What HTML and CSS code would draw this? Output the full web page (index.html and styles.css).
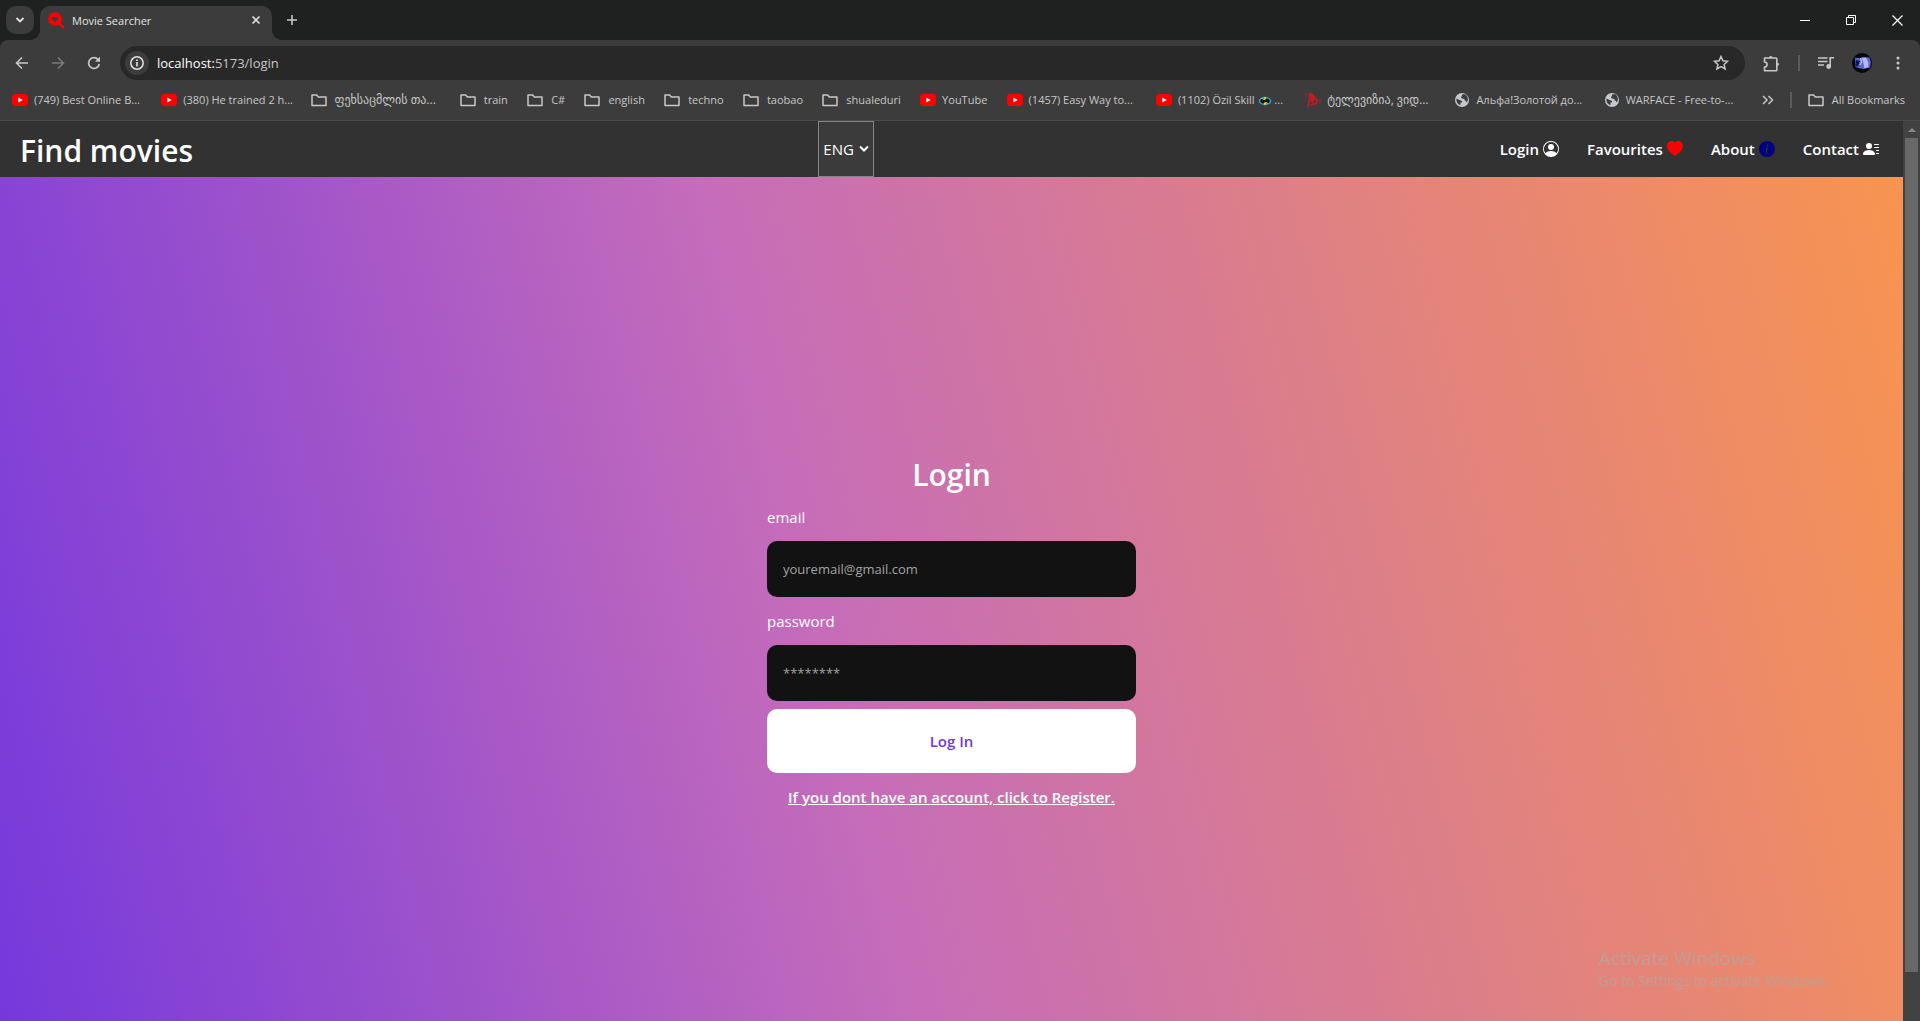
FILE: index.html
```html
<!DOCTYPE html>
<html lang="en">
<head>
<meta charset="utf-8">
<title>Movie Searcher</title>
<link rel="stylesheet" href="styles.css">
</head>
<body>
<svg class="defs" aria-hidden="true">
  <symbol id="yt" viewBox="0 0 16 16"><rect y="2" width="16" height="12" rx="3" fill="#f00"/><path d="M6.3 5.5v5l4.4-2.5z" fill="#fff"/></symbol>
  <symbol id="folder" viewBox="0 0 16 16"><path d="M1 3h4.700l1.600 2H15v8.500H1z" fill="none" stroke="#c7c7c7" stroke-width="1.500" stroke-linejoin="round"/></symbol>
  <symbol id="globe" viewBox="0 0 16 16"><circle cx="8" cy="8" r="7" fill="#c4c7cc"/><path d="M2.500 6.500l3 1.500 2.500 1v1.500H6.500V13c-2.500-.5-4.500-3-4-6.500zM8.500 2.300h2.800c1.700 1 2.700 3 2.600 5.200-.2 1.500-.8 2.500-1.400 3-.3-1.500-.8-2-2-2V7L8 6.500l-1-1z" fill="#3c3c3c"/></symbol>
</svg>

<header class="chrome">
  <div class="tabstrip">
    <button class="tab-search" aria-label="Search tabs"><svg width="12" height="12" viewBox="0 0 12 12"><path d="M2.500 4l3.500 3.500L9.500 4" fill="none" stroke="#e3e3e3" stroke-width="1.800"/></svg></button>
    <div class="tab">
      <svg width="17" height="17" viewBox="0 0 17 17"><circle cx="7" cy="7" r="6.800" fill="#f00"/><path d="M11 11l5 5" stroke="#f00" stroke-width="2.400"/><path d="M7 10.300L4.300 7.500C3 5.800 5.400 3.700 7 5.500c1.600-1.800 4 .3 2.700 2z" fill="#3c3c3c"/></svg>
      <span class="tab-title">Movie Searcher</span>
      <button class="plain" aria-label="Close tab"><svg width="10" height="10" viewBox="0 0 10 10"><path d="M1.500 1.500l7 7M8.500 1.500l-7 7" stroke="#dedede" stroke-width="1.600"/></svg></button>
    </div>
    <button class="plain new-tab" aria-label="New tab"><svg width="12" height="12" viewBox="0 0 12 12"><path d="M6 1v10M1 6h10" stroke="#c7c7c7" stroke-width="1.600"/></svg></button>
    <div class="window-controls">
      <button class="plain" aria-label="Minimize"><svg width="11" height="11" viewBox="0 0 11 11"><path d="M0 5.500h10" stroke="#fff"/></svg></button>
      <button class="plain" aria-label="Restore"><svg width="11" height="11" viewBox="0 0 11 11"><path d="M.5 2.500h7v7h-7zM2.500 2.500v-2h7v7h-2" fill="none" stroke="#fff"/></svg></button>
      <button class="plain" aria-label="Close"><svg width="11" height="11" viewBox="0 0 11 11"><path d="M.5.5l10 10M10.500.5l-10 10" stroke="#fff" stroke-width="1.200"/></svg></button>
    </div>
  </div>

  <div class="toolbar">
    <button class="plain" aria-label="Back"><svg width="14" height="14" viewBox="0 0 14 14"><path d="M13 7H2M7 1.500L1.500 7 7 12.500" fill="none" stroke="#c7c7c7" stroke-width="1.600"/></svg></button>
    <button class="plain" aria-label="Forward"><svg width="14" height="14" viewBox="0 0 14 14"><path d="M1 7h11M7 1.500L12.500 7 7 12.500" fill="none" stroke="#7a7a7a" stroke-width="1.600"/></svg></button>
    <button class="plain" aria-label="Reload"><svg width="14" height="14" viewBox="0 0 14 14"><path d="M12.300 8A5.400 5.400 0 1 1 11 3.400l1 1.100" fill="none" stroke="#c7c7c7" stroke-width="1.700"/><path d="M13 .8v5H8z" fill="#c7c7c7"/></svg></button>
    <div class="omnibox">
      <span class="site-info"><svg width="14" height="14" viewBox="0 0 14 14"><circle cx="7" cy="7" r="6.200" fill="none" stroke="#e3e3e3" stroke-width="1.500"/><path d="M7 6v4.500M7 3.500v1.500" stroke="#e3e3e3" stroke-width="1.600"/></svg></span>
      <span class="url"><b>localhost:</b>5173/login</span>
      <button class="plain" aria-label="Bookmark this tab"><svg width="16" height="16" viewBox="0 0 16 16"><path d="M8 1.500l1.900 4.300 4.700.5-3.500 3.100 1 4.600L8 11.600 3.900 14l1-4.600-3.500-3.100 4.700-.5z" fill="none" stroke="#c7c7c7" stroke-width="1.500"/></svg></button>
    </div>
    <div class="tools">
      <button class="plain" aria-label="Extensions"><svg width="17" height="17" viewBox="0 0 17 17"><path d="M1.500 3H13a.8.800 0 0 1 .8.800V15a.8.800 0 0 1-.8.800H1.500V12a2.200 2.200 0 0 0 0-5z" fill="none" stroke="#c7c7c7" stroke-width="1.600" stroke-linejoin="round"/><path d="M6 3a1.800 2 0 0 1 3.600 0zM14 7.500a2 1.800 0 0 1 0 3.600z" fill="#c7c7c7"/></svg></button>
      <i class="divider"></i>
      <button class="plain" aria-label="Media controls"><svg width="16" height="14" viewBox="0 0 16 14"><path d="M0 2h9.500M0 5.500h9.500M0 9h6M12.200 10V1.700H16" fill="none" stroke="#c7c7c7" stroke-width="1.600"/><circle cx="10.700" cy="10.500" r="2.400" fill="#c7c7c7"/></svg></button>
      <button class="plain" aria-label="Profile"><svg width="20" height="20" viewBox="0 0 20 20"><circle cx="10" cy="10" r="10" fill="#05050c"/><path d="M3 4.500l5 1 2-1.500 7.500.5 1.500 5-1 5-7 1.500-4.500-1-3-1z" fill="#5868d4"/><path d="M10 5l4-.5 2 4 .5 5.500-4 1.500-1-5z" fill="#bcb6ff"/><path d="M4 7l4 1-2 5.500L3.500 13z" fill="#11174c"/><path d="M8.500 5l1 4-1.500 3" stroke="#dfe4ff" fill="none"/></svg></button>
      <button class="plain" aria-label="Menu"><svg width="4" height="14" viewBox="0 0 4 14"><circle cx="2" cy="2" r="1.500" fill="#c7c7c7"/><circle cx="2" cy="7" r="1.500" fill="#c7c7c7"/><circle cx="2" cy="12" r="1.500" fill="#c7c7c7"/></svg></button>
    </div>
  </div>

  <nav class="bookmarks" aria-label="Bookmarks">
    <div class="bookmark-list">
      <a href="#" class="long"><svg><use href="#yt"/></svg>(749) Best Online B...</a>
      <a href="#" class="long"><svg><use href="#yt"/></svg>(380) He trained 2 h...</a>
      <a href="#" class="dir long" lang="ka"><svg><use href="#folder"/></svg>ფეხსაცმლის თა...</a>
      <a href="#" class="dir"><svg><use href="#folder"/></svg>train</a>
      <a href="#" class="dir"><svg><use href="#folder"/></svg>C#</a>
      <a href="#" class="dir"><svg><use href="#folder"/></svg>english</a>
      <a href="#" class="dir"><svg><use href="#folder"/></svg>techno</a>
      <a href="#" class="dir"><svg><use href="#folder"/></svg>taobao</a>
      <a href="#" class="dir"><svg><use href="#folder"/></svg>shualeduri</a>
      <a href="#"><svg><use href="#yt"/></svg>YouTube</a>
      <a href="#" class="long"><svg><use href="#yt"/></svg>(1457) Easy Way to...</a>
      <a href="#" class="long"><svg><use href="#yt"/></svg><span>(1102) Özil Skill <svg class="emoji" viewBox="0 0 14 12"><ellipse cx="7" cy="6" rx="5.500" ry="3.500" fill="#111" stroke="#29a8d8" stroke-width="1.500"/><path d="M3 3.500h3l1-2 1.500 2.500L6 5zM11 8.500H8l-1 2L5.500 8 8 7z" fill="#ffd21e"/></svg> ...</span></a>
      <a href="#" class="long" lang="ka"><svg viewBox="0 0 16 16"><path d="M3.500 1.500l3-.5c2 1 4 4 6 6.500 1.500 2 0 5-2.500 5.500-3 .5-6 0-8 1.500C3 10 4 6 3.500 1.500z" fill="#b81d24"/><circle cx="5.800" cy="11" r="1.600" fill="#3c3c3c"/><circle cx="9.800" cy="9.500" r="1.600" fill="#3c3c3c"/><path d="M1 1v4M15 7v4M2 14.500l2 1" stroke="#b81d24"/></svg>ტელევიზია, ვიდ...</a>
      <a href="#" class="long"><svg><use href="#globe"/></svg>Альфа!Золотой до...</a>
      <a href="#" class="long"><svg><use href="#globe"/></svg>WARFACE - Free-to-...</a>
    </div>
    <button class="plain" aria-label="More bookmarks"><svg width="12" height="10" viewBox="0 0 12 10"><path d="M1 1l4 4-4 4M6.500 1l4 4-4 4" fill="none" stroke="#c7c7c7" stroke-width="1.500"/></svg></button>
    <i class="divider"></i>
    <a href="#" class="dir"><svg><use href="#folder"/></svg>All Bookmarks</a>
  </nav>
</header>

<div class="viewport">
  <div class="page">
    <header class="site-header">
      <h1>Find movies</h1>
      <span class="lang"><select aria-label="Language"><option>ENG</option><option>GEO</option></select><svg width="10" height="8" viewBox="0 0 10 8"><path d="M1 1.500l4 4 4-4" fill="none" stroke="#fff" stroke-width="2"/></svg></span>
      <nav class="site-nav" aria-label="Main">
        <a href="#">Login <svg viewBox="0 0 16 16" fill="#fff"><path d="M11 6a3 3 0 1 1-6 0 3 3 0 0 1 6 0"/><path fill-rule="evenodd" d="M0 8a8 8 0 1 1 16 0A8 8 0 0 1 0 8m8-7a7 7 0 0 0-5.468 11.370C3.242 11.226 4.805 10 8 10s4.757 1.225 5.468 2.370A7 7 0 0 0 8 1"/></svg></a>
        <a href="#">Favourites <svg viewBox="0 0 16 16" fill="#f00"><path d="M8 15C-7.333 4.868 3.279-3.040 7.824 1.143q.09.083.176.171a3 3 0 0 1 .176-.17C12.720-3.042 23.333 4.867 8 15"/></svg></a>
        <a href="#">About <svg viewBox="0 0 16 16"><circle cx="8" cy="8" r="8" fill="navy"/><path d="M8.930 6.588l-2.290.287-.082.380.450.083c.294.070.352.176.288.469l-.738 3.468c-.194.897.105 1.319.808 1.319.545 0 1.178-.252 1.465-.598l.088-.416c-.200.176-.492.246-.686.246-.275 0-.375-.193-.304-.533z" fill="#323232"/><circle cx="8.500" cy="4.500" r="1" fill="#323232"/></svg></a>
        <a href="#">Contact <svg viewBox="0 0 16 16" fill="#fff"><path d="M6 8a3 3 0 1 0 0-6 3 3 0 0 0 0 6m-5 6s-1 0-1-1 1-4 6-4 6 3 6 4-1 1-1 1zM11 3.500a.5.500 0 0 1 .5-.5h4a.5.500 0 0 1 0 1h-4a.5.500 0 0 1-.5-.5m.5 2.500a.5.500 0 0 0 0 1h4a.5.500 0 0 0 0-1zm2 3a.5.500 0 0 0 0 1h2a.5.500 0 0 0 0-1zm0 3a.5.500 0 0 0 0 1h2a.5.500 0 0 0 0-1z"/></svg></a>
      </nav>
    </header>
    <main>
      <form>
        <h2>Login</h2>
        <label for="email">email</label>
        <input id="email" type="email" placeholder="youremail@gmail.com">
        <label for="password">password</label>
        <input id="password" type="password" placeholder="********">
        <button type="button" class="submit">Log In</button>
        <a href="#" class="register">If you dont have an account, click to Register.</a>
      </form>
    </main>
  </div>
  <div class="scrollbar"><i class="arrow"></i><i class="thumb"></i></div>
</div>
<aside class="watermark"><p>Activate Windows</p><p class="sub">Go to Settings to activate Windows.</p></aside>
</body>
</html>
```
FILE: styles.css
```css
* { box-sizing: border-box; }

body {
  margin: 0;
  min-height: 100vh;
  display: flex;
  flex-direction: column;
  font-family: "Open Sans", "DejaVu Sans", sans-serif;
  font-size: 15px;
  color: #fff;
  background: #1f2120;
}

h1, h2, p { margin: 0; }
a { color: inherit; text-decoration: none; }
svg { display: block; flex: none; }
.defs { position: absolute; width: 0; height: 0; }

.plain {
  display: flex;
  padding: 0;
  border: 0;
  background: none;
}

.divider { width: 2px; height: 16px; background: #5c5c5c; }

/* Browser frame */
.chrome { font-size: 11px; color: #c7c7c7; }

.tabstrip {
  display: flex;
  align-items: center;
  height: 40px;
  padding-left: 6px;
}

.tab-search {
  display: grid;
  place-items: center;
  width: 28px;
  height: 28px;
  padding: 0;
  border: 0;
  border-radius: 10px;
  background: #3c3c3c;
}

.tab {
  position: relative;
  display: flex;
  align-items: center;
  align-self: flex-end;
  gap: 7px;
  width: 232px;
  height: 34px;
  margin-left: 6px;
  padding: 0 11px 6px 8px;
  border-radius: 10px 10px 0 0;
  background: #3c3c3c;
  color: #e3e3e3;
}

/* Curved feet that join the tab to the toolbar */
.tab::before, .tab::after {
  content: "";
  position: absolute;
  bottom: 0;
  width: 10px;
  height: 10px;
}

.tab::before { right: 100%; background: radial-gradient(circle at 0 0, transparent 10px, #3c3c3c 10px); }
.tab::after { left: 100%; background: radial-gradient(circle at 100% 0, transparent 10px, #3c3c3c 10px); }

.tab-title { flex: 1; }
.new-tab { margin-left: 14px; }

.window-controls {
  display: flex;
  gap: 35px;
  margin-left: auto;
  padding-right: 17px;
}

.toolbar {
  display: flex;
  align-items: center;
  gap: 22px;
  height: 46px;
  padding: 0 20px 0 15px;
  border-radius: 8px 8px 0 0;
  background: #3c3c3c;
}

.omnibox {
  flex: 1;
  display: flex;
  align-items: center;
  gap: 8px;
  height: 34px;
  margin: 0 -4px 0 -3px;
  padding: 0 16px 0 5px;
  border-radius: 17px;
  background: #282828;
}

.site-info {
  display: grid;
  place-items: center;
  width: 24px;
  height: 24px;
  border-radius: 50%;
  background: #3c3c3c;
}

.url { flex: 1; font-size: 13px; }
.url b { font-weight: 400; color: #fff; }

.tools { display: flex; align-items: center; gap: 18px; }
.tools button:last-child { margin-left: 6px; }

.bookmarks {
  display: flex;
  align-items: center;
  height: 35px;
  padding: 0 15px 7px 12px;
  border-bottom: 1px solid #4a4a4a;
  background: #3c3c3c;
  white-space: nowrap;
}

.bookmarks .divider { margin: 0 16px; }

.bookmark-list {
  flex: 1;
  display: flex;
  justify-content: space-between;
  margin-right: 28px;
}

.bookmarks a { display: flex; align-items: center; gap: 6px; }
.bookmarks a.dir { gap: 8px; }
.bookmarks a.long { width: 130px; }
.bookmarks a:lang(ka) { font-size: 12px; }
.bookmarks a svg { width: 16px; height: 16px; }
.bookmarks a .emoji { display: inline-block; width: 14px; height: 12px; vertical-align: middle; }

/* Site */
.viewport { flex: 1; display: flex; }

.page {
  flex: 1;
  display: flex;
  flex-direction: column;
}

.site-header {
  display: flex;
  justify-content: space-between;
  align-items: center;
  height: 56px;
  padding: 0 24px 0 20px;
  background: #323232;
}

h1, h2 { font-size: 30px; font-weight: 600; }
h1 { padding-top: 2px; }

.lang { position: relative; }

.lang select {
  appearance: none;
  display: block;
  width: 56px;
  height: 56px;
  padding: 0 4px;
  border: 1px solid #858585;
  border-radius: 0;
  background: #3b3b3b;
  color: #fff;
  font: inherit;
}

.lang svg { position: absolute; right: 5px; top: 24px; pointer-events: none; }

.site-nav {
  display: flex;
  justify-content: flex-end;
  gap: 28px;
  font-weight: 600;
}

.site-nav a { display: flex; align-items: center; gap: 4px; }
.site-nav svg { width: 16px; height: 16px; }

main {
  flex: 1;
  display: flex;
  align-items: center;
  justify-content: center;
  padding-top: 72px;
  background: linear-gradient(76deg, #7538dc 0%, #c56cba 43%, #fb964a 103%);
}

form {
  display: flex;
  flex-direction: column;
  gap: 8px;
  width: 369px;
}

h2 { line-height: 36px; }
h2, .register { text-align: center; }
label { line-height: 32px; }

form input {
  height: 56px;
  padding: 0 16px;
  border: 0;
  border-radius: 10px;
  background: #121212;
  color: #fff;
  font: inherit;
  font-size: 13px;
}

form input::placeholder { color: #a2a2a2; }

.submit {
  height: 64px;
  border: 0;
  border-radius: 10px;
  background: #fff;
  color: #7038dc;
  font: inherit;
  font-weight: 600;
}

.register {
  line-height: 32px;
  font-weight: 600;
  text-decoration: underline;
}

.scrollbar {
  display: flex;
  flex-direction: column;
  align-items: center;
  width: 17px;
  padding: 7px 2px 49px;
  background: #424242;
}

.arrow {
  border: 4px solid transparent;
  border-top: 0;
  border-bottom: 4px solid #8a8a8a;
  margin-bottom: 6px;
}

.thumb { flex: 1; width: 13px; background: #686868; }

.watermark {
  position: fixed;
  right: 92px;
  bottom: 30px;
  font-size: 14px;
  line-height: 20px;
  color: #bd9f95;
}

.watermark p:first-child { font-size: 19px; line-height: 26px; }
```
